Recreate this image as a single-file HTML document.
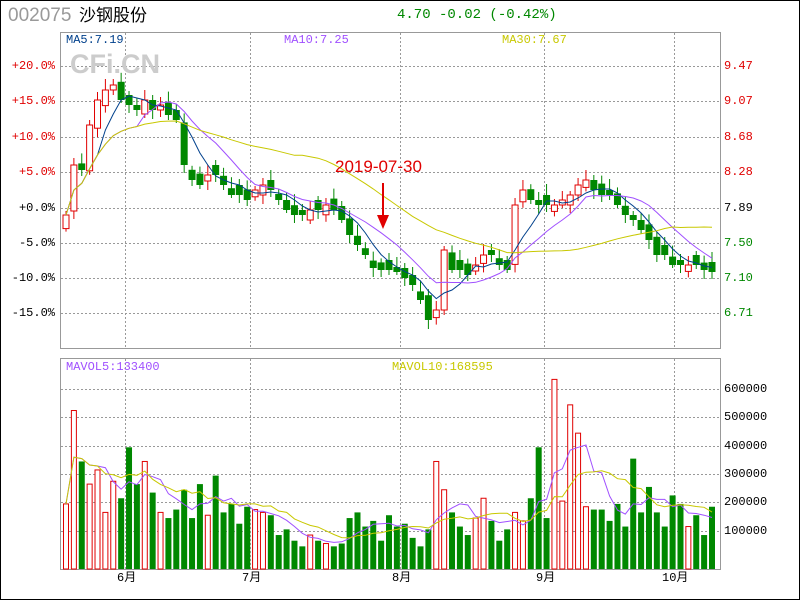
<!DOCTYPE html><html><head><meta charset="utf-8"><style>
body{margin:0;width:800px;height:600px;background:#fff;overflow:hidden;position:relative;font-family:"Liberation Mono","Noto Sans CJK SC",monospace}
#frame{position:absolute;left:0;top:0;width:798px;height:598px;border:1px solid #000}
.t{position:absolute;white-space:nowrap;font-size:12px;line-height:12px}
</style></head><body><div id="frame"></div>
<div class="t" style="left:8px;top:6px;font-family:'Liberation Sans',sans-serif;font-size:19px;line-height:20px;color:#999">002075</div>
<div class="t" style="left:79px;top:6px;font-family:'Liberation Sans','Noto Sans CJK SC',sans-serif;font-size:17px;line-height:20px;color:#000">沙钢股份</div>
<div class="t" style="left:397px;top:8px;font-size:14px;line-height:14px;color:#008800">4.70 -0.02 (-0.42%)</div>
<svg id="s" width="800" height="600" style="position:absolute;left:0;top:0"></svg>
<div class="t" style="left:70px;top:50px;font-family:'Liberation Sans',sans-serif;font-weight:bold;font-size:27px;line-height:28px;color:#ccc">CFi.CN</div>
<div class="t" style="left:66px;top:34px;color:#00408c">MA5:7.19</div>
<div class="t" style="left:284px;top:34px;color:#a050ff">MA10:7.25</div>
<div class="t" style="left:502px;top:34px;color:#c8c800">MA30:7.67</div>
<div class="t" style="left:66px;top:361px;color:#a050ff">MAVOL5:133400</div>
<div class="t" style="left:392px;top:361px;color:#c8c800">MAVOL10:168595</div>
<div class="t" style="left:335px;top:158px;font-family:'Liberation Sans',sans-serif;font-size:17px;line-height:18px;color:#e00000">2019-07-30</div>
<div id="lab"></div>
<script>
(function(){
var s=document.getElementById('s'),h='';
function L(x1,y1,x2,y2,c,d){h+='<line x1="'+x1+'" y1="'+y1+'" x2="'+x2+'" y2="'+y2+'" stroke="'+c+'"'+(d?' stroke-dasharray="2,2"':'')+'/>';}
var gx=[125,250,400,544,674];
gx.forEach(function(x){L(x+.5,33,x+.5,348,'#999',1);L(x+.5,359,x+.5,569,'#999',1);});
[66,101,137,172,208,243,278,313].forEach(function(y){L(61,y+.5,720,y+.5,'#999',1);});
[389,417,446,474,502,531].forEach(function(y){L(61,y+.5,720,y+.5,'#999',1);});
h+='<rect x="60.5" y="32.5" width="660" height="316" fill="none" stroke="#999"/>';
h+='<rect x="60.5" y="358.5" width="660" height="211" fill="none" stroke="#999"/>';
var cy=[215,165,170,125,100,90,85,100,105,110,100,110,105,115,120,165,180,185,175,175,185,195,195,200,190,185,190,200,210,215,215,210,210,205,210,220,235,245,255,268,270,270,272,278,285,300,320,310,250,270,270,275,265,255,255,265,270,205,190,200,205,205,205,200,195,185,180,190,195,195,205,215,220,230,240,255,255,265,265,265,265,270,272];
var vo=[23,56,38,30,35,20,31,25,43,30,38,27,20,18,21,28,18,30,19,33,20,23,16,22,21,20,19,12,14,10,8,12,10,9,8,9,18,20,15,17,10,19,15,16,11,8,14,38,28,20,15,12,18,25,17,10,14,20,17,25,43,18,67,24,58,48,22,21,21,17,23,15,39,20,29,20,15,26,23,15,19,12,22,17,17,20,12,24,34,12,10,23,12,9];
var n=cy.length,sp=(712-66)/(n-1);
function ma(a,k,i){var t=0,c=0;for(var j=Math.max(0,i-k+1);j<=i;j++){t+=a[j];c++;}return t/c;}
function pl(arr,k,c,base){var p='';for(var i=0;i<arr.length;i++){var m=ma(arr,k,i);p+=(i?'L':'M')+(66+i*sp).toFixed(1)+','+(base?base(m):m).toFixed(1);}h+='<path d="'+p+'" fill="none" stroke="'+c+'" stroke-width="1"/>';}
for(var i=0;i<n;i++){var x=66+i*sp,c=cy[i],pv=i?cy[i-1]:c+20;var o=pv+((i*37)%17-8)*0.8;if(Math.abs(o-c)<6)o=c+(c<pv?10:-10)*((i%3)?1:0.5);var up=c<o;var tp=Math.min(c,o),bt=Math.max(c,o);if(bt-tp<1)bt=tp+1;var col=up?'#e00000':'#008800';
L(x,tp-4-(i*3)%8,x,bt+3+(i*5)%7,col);
if(up)h+='<rect x="'+(x-3)+'" y="'+tp+'" width="6" height="'+(bt-tp)+'" fill="#fff" stroke="'+col+'"/>';else h+='<rect x="'+(x-3.5)+'" y="'+tp+'" width="7" height="'+(bt-tp)+'" fill="'+col+'"/>';
var v=vo[i%vo.length],vy=569-v*2.83;
if(up)h+='<rect x="'+(x-2.5)+'" y="'+vy+'" width="5" height="'+(569-vy)+'" fill="#fff" stroke="#e00000"/>';else h+='<rect x="'+(x-3)+'" y="'+vy+'" width="6" height="'+(569-vy)+'" fill="#008800"/>';}
pl(cy,5,'#00408c');pl(cy,10,'#a050ff');pl(cy,30,'#c8c800');
var vv=vo.slice(0,n);pl(vv,5,'#a050ff',function(m){return 569-m*2.83});pl(vv,10,'#c8c800',function(m){return 569-m*2.83});
h+='<line x1="383" y1="183" x2="383" y2="220" stroke="#e00000" stroke-width="2"/><path d="M377,215 L389,215 L383,229Z" fill="#e00000"/>';
s.innerHTML=h;
var lb='',lp=['+20.0%','+15.0%','+10.0%','+5.0%','+0.0%','-5.0%','-10.0%','-15.0%'],rp=['9.47','9.07','8.68','8.28','7.89','7.50','7.10','6.71'],ys=[66,101,137,172,208,243,278,313];
for(var k=0;k<8;k++){var cl=k<4?'#e00000':(k==4?'#000':'#008800');lb+='<div class="t" style="right:745px;top:'+(ys[k]-6)+'px;color:'+(k<4?'#e00000':'#000')+'">'+lp[k]+'</div><div class="t" style="left:724px;top:'+(ys[k]-6)+'px;color:'+cl+'">'+rp[k]+'</div>';}
var vl=['600000','500000','400000','300000','200000','100000'],vy2=[389,417,446,474,502,531];
for(k=0;k<6;k++)lb+='<div class="t" style="left:724px;top:'+(vy2[k]-6)+'px;color:#000">'+vl[k]+'</div>';
var ml=['6月','7月','8月','9月','10月'];for(k=0;k<5;k++)lb+='<div class="t" style="left:'+(gx[k]-8-(k==4?4:0))+'px;top:572px;color:#000">'+ml[k]+'</div>';
document.getElementById('lab').innerHTML=lb;
})();
</script></body></html>
